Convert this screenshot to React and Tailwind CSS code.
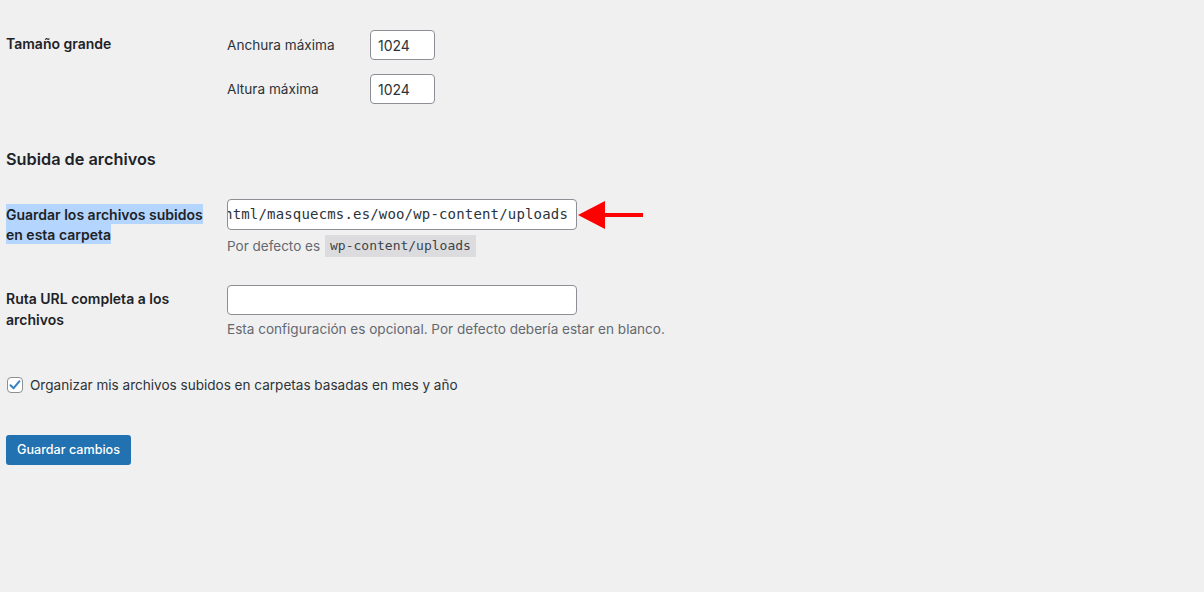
import React from "react";

const font = { fontFamily: "Inter, 'Noto Sans', sans-serif" };

function Arrow() {
  return (
    <svg width="66" height="30" viewBox="0 0 66 30" className="ml-[1px] shrink-0">
      <polygon points="0,15 27,1 27,29" fill="#ff0000" />
      <rect x="26" y="13" width="39" height="4" fill="#ff0000" />
    </svg>
  );
}

export default function App() {
  return (
    <div
      className="min-h-[592px] w-full bg-[#f0f0f1] pl-[6px] pt-[30px] text-[14px] text-[#1d2327]"
      style={font}
    >
      {/* Tamaño grande */}
      <div className="flex">
        <div className="w-[221px] shrink-0 pt-[4px] text-[14px] leading-[20px] font-semibold">
          Tamaño grande
        </div>
        <div className="flex flex-col gap-[14px]">
          <div className="flex items-center">
            <span className="w-[143px] text-[13.6px] leading-[20px] text-[#2c3338]">Anchura máxima</span>
            <div className="flex h-[30px] w-[65px] items-center rounded-[4px] border border-[#8c8f94] bg-white px-[7px] text-[14px] text-[#2c3338]">
              1024
            </div>
          </div>
          <div className="flex items-center">
            <span className="w-[143px] text-[13.6px] leading-[20px] text-[#2c3338]">Altura máxima</span>
            <div className="flex h-[30px] w-[65px] items-center rounded-[4px] border border-[#8c8f94] bg-white px-[7px] text-[14px] text-[#2c3338]">
              1024
            </div>
          </div>
        </div>
      </div>

      {/* Heading */}
      <h2 className="mt-[43px] text-[16.3px] leading-[24px] font-semibold text-[#1d2327]">
        Subida de archivos
      </h2>

      {/* Guardar */}
      <div className="mt-[28px] flex">
        <div className="w-[221px] shrink-0 pt-[5px] text-[14px] leading-[20px] font-semibold">
          <span className="bg-[#b4d5fe] py-[1.5px] [box-decoration-break:clone]">
            Guardar los archivos subidos
            <br />
            en esta carpeta
          </span>
        </div>
        <div className="flex flex-col">
          <div className="flex items-center">
            <div className="flex h-[31px] w-[350px] items-center justify-end overflow-hidden whitespace-nowrap rounded-[4px] border border-[#8c8f94] bg-white pl-0 pr-[8px] text-[14px] tracking-[0.17px] text-[#2c3338] [font-family:'DejaVu_Sans_Mono',monospace]">
              <span className="shrink-0">html/masquecms.es/woo/wp-content/uploads</span>
            </div>
            <Arrow />
          </div>
          <div className="mt-[5px] flex items-center text-[13.5px] leading-[20px] text-[#646970]">
            <span>Por defecto es</span>
            <code className="ml-[5px] bg-[#dcdcde] px-[5px] py-[1px] text-[13px] text-[#3c434a] [font-family:'DejaVu_Sans_Mono',monospace]">
              wp-content/uploads
            </code>
          </div>
        </div>
      </div>

      {/* Ruta URL */}
      <div className="mt-[28px] flex">
        <div className="w-[221px] shrink-0 pt-[4px] text-[14px] leading-[20.5px] font-semibold">
          Ruta URL completa a los
          <br />
          archivos
        </div>
        <div className="flex flex-col">
          <div className="h-[30px] w-[350px] rounded-[4px] border border-[#8c8f94] bg-white" />
          <div className="mt-[4px] text-[13.55px] leading-[20px] text-[#646970]">
            Esta configuración es opcional. Por defecto debería estar en blanco.
          </div>
        </div>
      </div>

      {/* Checkbox */}
      <div className="mt-[36px] flex items-center">
        <div className="ml-[1px] flex h-[16px] w-[16px] items-center justify-center rounded-[4px] border border-[#8c8f94] bg-white">
          <svg width="14" height="14" viewBox="0 0 14 14">
            <path d="M2.5 7.2 L5.6 10.2 L11.5 3.2" fill="none" stroke="#3582c4" strokeWidth="2" strokeLinecap="round" strokeLinejoin="round" />
          </svg>
        </div>
        <span className="ml-[7px] text-[13.55px] leading-[20px] text-[#2c3338]">
          Organizar mis archivos subidos en carpetas basadas en mes y año
        </span>
      </div>

      {/* Button */}
      <button className="mt-[40px] flex h-[30px] items-center rounded-[3px] bg-[#2271b1] px-[11px] text-[12.6px] font-medium text-white">
        Guardar cambios
      </button>
    </div>
  );
}
